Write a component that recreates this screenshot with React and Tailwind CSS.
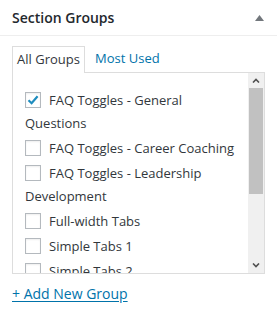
import { useState } from "react";

const groups = [
  { label: "FAQ Toggles - General Questions", checked: true },
  { label: "FAQ Toggles - Career Coaching" },
  { label: "FAQ Toggles - Leadership Development" },
  { label: "Full-width Tabs" },
  { label: "Simple Tabs 1" },
  { label: "Simple Tabs 2" },
];

const Check = ({ checked }) => (
  <span className="absolute left-0 top-[4px] w-4 h-4 border border-[#b4b9be] bg-white shadow-[inset_0_1px_2px_rgba(0,0,0,0.07)] flex items-center justify-center">
    {checked && (
      <svg width="14" height="14" viewBox="0 0 14 14">
        <path d="M2.5 7.2 L5.6 10.2 L11.6 3.2" fill="none" stroke="#1e8cbe" strokeWidth="2.2" />
      </svg>
    )}
  </span>
);

export default function App() {
  const [items, setItems] = useState(groups);

  return (
    <div className="w-[277px] h-[323px] bg-white text-[#32373c] overflow-hidden" style={{ fontFamily: '"Open Sans", "Noto Sans", sans-serif' }}>
      <div className="h-[36px] flex items-center justify-between pl-3 pr-[13px] border-b border-[#eee]">
        <h2 className="text-[14px] font-semibold text-[#23282d]">Section Groups</h2>
        <svg width="9" height="6" viewBox="0 0 9 6">
          <path d="M0 6 L4.5 0 L9 6 Z" fill="#72777c" />
        </svg>
      </div>

      <div className="px-3 pt-[9px]">
        <div className="flex items-end text-[13px]">
          <div className="h-[27px] w-[73px] border border-[#ddd] border-b-0 bg-white flex items-center justify-center relative top-px">
            All Groups
          </div>
          <a className="ml-[10px] h-[27px] flex items-center text-[#0073aa]">Most Used</a>
        </div>

        <div className="h-[202px] border border-[#ddd] flex">
          <ul className="flex-1 overflow-hidden pl-3 pr-[10px] pt-[15px] text-[13px] leading-[23px]">
            {items.map((item, i) => (
              <li key={item.label} className="relative py-px">
                <label className="cursor-pointer">
                  <Check checked={item.checked} />
                  <input
                    type="checkbox"
                    className="hidden"
                    checked={!!item.checked}
                    onChange={() =>
                      setItems(items.map((it, j) => (j === i ? { ...it, checked: !it.checked } : it)))
                    }
                  />
                  <span className="pl-6">{item.label}</span>
                </label>
              </li>
            ))}
          </ul>
          <div className="w-4 bg-[#f0f0f0] flex flex-col">
            <div className="h-[15px] flex items-center justify-center">
              <svg width="8" height="5" viewBox="0 0 8 5">
                <path d="M1 4.5 L4 1.5 L7 4.5" fill="none" stroke="#505050" strokeWidth="1.6" />
              </svg>
            </div>
            <div className="h-[106px] mx-px bg-[#c1c1c1]" />
            <div className="flex-1" />
            <div className="h-[15px] flex items-center justify-center">
              <svg width="8" height="5" viewBox="0 0 8 5">
                <path d="M1 0.5 L4 3.5 L7 0.5" fill="none" stroke="#505050" strokeWidth="1.6" />
              </svg>
            </div>
          </div>
        </div>

        <a className="inline-block mt-[9px] text-[14px] text-[#0073aa] underline underline-offset-2">+ Add New Group</a>
      </div>
    </div>
  );
}
